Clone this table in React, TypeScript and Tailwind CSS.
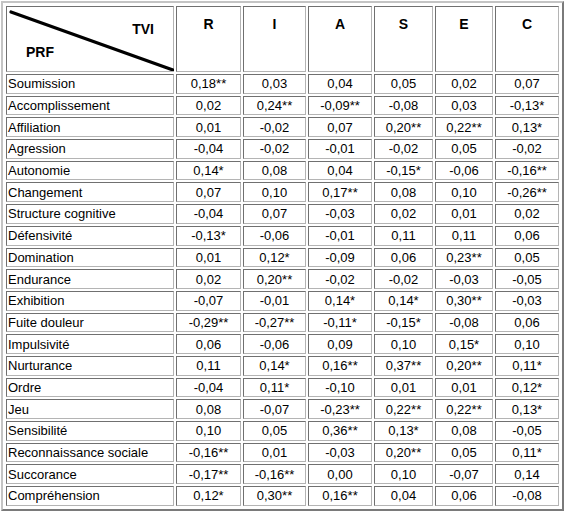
const columns = ["R", "I", "A", "S", "E", "C"];

const rows: [string, string[]][] = [
  ["Soumission", ["0,18**", "0,03", "0,04", "0,05", "0,02", "0,07"]],
  ["Accomplissement", ["0,02", "0,24**", "-0,09**", "-0,08", "0,03", "-0,13*"]],
  ["Affiliation", ["0,01", "-0,02", "0,07", "0,20**", "0,22**", "0,13*"]],
  ["Agression", ["-0,04", "-0,02", "-0,01", "-0,02", "0,05", "-0,02"]],
  ["Autonomie", ["0,14*", "0,08", "0,04", "-0,15*", "-0,06", "-0,16**"]],
  ["Changement", ["0,07", "0,10", "0,17**", "0,08", "0,10", "-0,26**"]],
  ["Structure cognitive", ["-0,04", "0,07", "-0,03", "0,02", "0,01", "0,02"]],
  ["Défensivité", ["-0,13*", "-0,06", "-0,01", "0,11", "0,11", "0,06"]],
  ["Domination", ["0,01", "0,12*", "-0,09", "0,06", "0,23**", "0,05"]],
  ["Endurance", ["0,02", "0,20**", "-0,02", "-0,02", "-0,03", "-0,05"]],
  ["Exhibition", ["-0,07", "-0,01", "0,14*", "0,14*", "0,30**", "-0,03"]],
  ["Fuite douleur", ["-0,29**", "-0,27**", "-0,11*", "-0,15*", "-0,08", "0,06"]],
  ["Impulsivité", ["0,06", "-0,06", "0,09", "0,10", "0,15*", "0,10"]],
  ["Nurturance", ["0,11", "0,14*", "0,16**", "0,37**", "0,20**", "0,11*"]],
  ["Ordre", ["-0,04", "0,11*", "-0,10", "0,01", "0,01", "0,12*"]],
  ["Jeu", ["0,08", "-0,07", "-0,23**", "0,22**", "0,22**", "0,13*"]],
  ["Sensibilité", ["0,10", "0,05", "0,36**", "0,13*", "0,08", "-0,05"]],
  ["Reconnaissance sociale", ["-0,16**", "0,01", "-0,03", "0,20**", "0,05", "0,11*"]],
  ["Succorance", ["-0,17**", "-0,16**", "0,00", "0,10", "-0,07", "0,14"]],
  ["Compréhension", ["0,12*", "0,30**", "0,16**", "0,04", "0,06", "-0,08"]],
];

// inset cell border, like an old border="1" table
const cell =
  "border border-t-[#707070] border-l-[#707070] border-b-[#b4b4b4] border-r-[#b4b4b4] px-px py-0";

export default function App() {
  return (
    <div className="bg-white min-h-[513px] pt-px pl-px font-['Liberation_Sans',Arial,sans-serif] text-[13px] leading-[15px] text-black">
      <table className="table-fixed w-[563px] border-separate border-spacing-[2px] p-px border-2 border-t-[#c4c4c4] border-l-[#c4c4c4] border-b-[#7a7a7a] border-r-[#7a7a7a]">
        <colgroup>
          <col className="w-[168px]" />
          <col className="w-[65px]" />
          <col className="w-[63px]" />
          <col className="w-[64px]" />
          <col className="w-[59px]" />
          <col className="w-[58px]" />
          <col className="w-[64px]" />
        </colgroup>
        <thead>
          <tr>
            <th className={`${cell} h-[66px] p-0 align-top text-[14px] leading-[16px] font-bold`}>
              {/* diagonal header cell */}
              <div className="relative h-[64px]">
                <svg
                  className="absolute inset-0"
                  width="166"
                  height="64"
                  viewBox="0 0 166 64"
                  preserveAspectRatio="none"
                >
                  <line x1="3" y1="5" x2="165" y2="63" stroke="#000" strokeWidth="3.2" strokeLinecap="round" />
                </svg>
                <div className="pt-[14px] pr-[18px] text-right">TVI</div>
                <div className="pt-[7px] pl-[18px] text-left">PRF</div>
              </div>
            </th>
            {columns.map((c) => (
              <th
                key={c}
                className={`${cell} h-[66px] pt-[9px] align-top text-center text-[14px] leading-[16px] font-bold`}
              >
                {c}
              </th>
            ))}
          </tr>
        </thead>
        <tbody>
          {rows.map(([label, vals]) => (
            <tr key={label}>
              <td className={`${cell} h-[19.7px] text-left align-middle whitespace-nowrap`}>{label}</td>
              {vals.map((v, i) => (
                <td key={i} className={`${cell} h-[19.7px] text-center align-middle`}>
                  {v}
                </td>
              ))}
            </tr>
          ))}
        </tbody>
      </table>
    </div>
  );
}
